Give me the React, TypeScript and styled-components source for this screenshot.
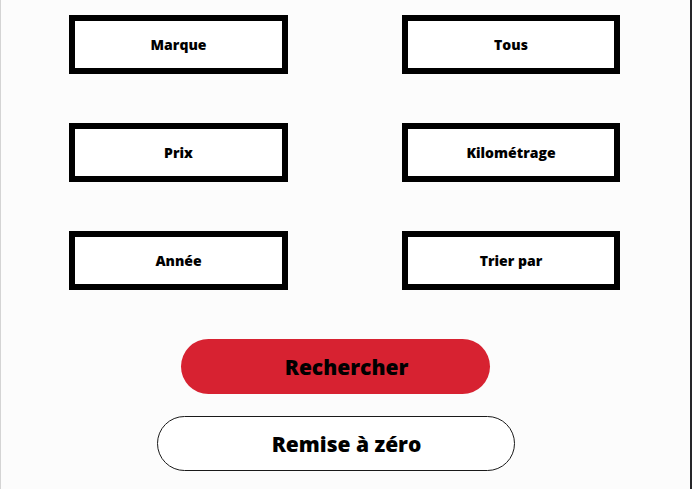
import React from 'react'
import styled, { createGlobalStyle } from 'styled-components'

const GlobalStyle = createGlobalStyle`
  html, body {
    margin: 0;
    padding: 0;
    background: #fcfcfc;
  }
  body {
    font-family: 'Open Sans', 'Noto Sans', sans-serif;
  }
`

const filters = ['Marque', 'Tous', 'Prix', 'Kilométrage', 'Année', 'Trier par']

const SearchPage: React.FC = () => {
  return (
    <Frame>
      <GlobalStyle />
      <FilterGrid>
        {filters.map((label) => (
          <FilterBox key={label}>{label}</FilterBox>
        ))}
      </FilterGrid>
      <Actions>
        <ActionButton $primary>Rechercher</ActionButton>
        <ActionButton $wide>Remise à zéro</ActionButton>
      </Actions>
    </Frame>
  )
}

const Frame = styled.div`
  box-sizing: border-box;
  width: 692px;
  height: 489px;
  border-left: 1px solid #d4d4d4;
  border-right: 2px solid #26262a;
  background: #fcfcfc;
  display: flex;
  flex-direction: column;
  padding-top: 15px;
`

const FilterGrid = styled.div`
  display: grid;
  grid-template-columns: 219px 218px;
  column-gap: 114px;
  row-gap: 49px;
  padding-left: 68px;
`

const FilterBox = styled.div`
  box-sizing: border-box;
  height: 59px;
  border: 6px solid #000;
  background: #fff;
  display: flex;
  align-items: center;
  justify-content: center;
  font-size: 14px;
  font-weight: 800;
  color: #000;
`

const Actions = styled.div`
  display: flex;
  flex-direction: column;
  align-items: center;
  gap: 22px;
  margin-top: 49px;
  padding-right: 20px;
`

const ActionButton = styled.button<{ $primary?: boolean; $wide?: boolean }>`
  box-sizing: border-box;
  width: ${(p) => (p.$wide ? '358px' : '309px')};
  height: 55px;
  padding: 0 0 0 22px;
  border-radius: 28px;
  border: ${(p) => (p.$primary ? 'none' : '1.5px solid #1a1a1a')};
  background: ${(p) => (p.$primary ? '#d72231' : '#fff')};
  color: #000;
  font-family: 'Open Sans', 'Noto Sans', sans-serif;
  font-size: 21px;
  font-weight: 800;
  cursor: pointer;
`

export default SearchPage
